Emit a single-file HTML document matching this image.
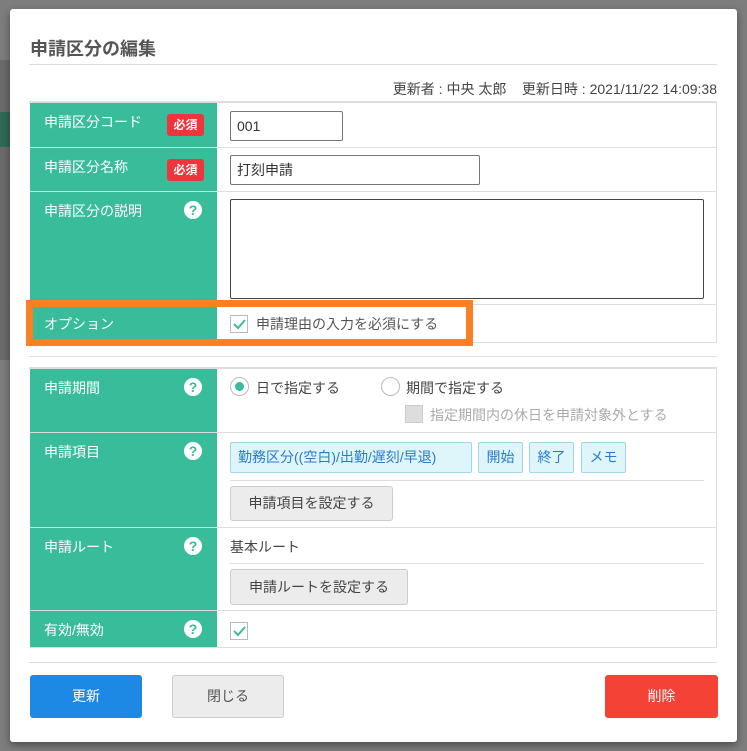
<!DOCTYPE html>
<html><head><meta charset="utf-8"><style>
*{box-sizing:border-box;margin:0;padding:0}
body{width:747px;height:751px;background:#7d7d7d;position:relative;overflow:hidden;font-family:"Liberation Sans","Noto Sans CJK JP",sans-serif;font-size:14px;color:#333}
.a{position:absolute}
.modal{left:10px;top:9px;width:727px;height:733px;background:#fff;border-radius:3px;box-shadow:0 3px 8px rgba(0,0,0,.4)}
.lab{background:#38bc99;color:#fff;left:30px;width:187px;border-bottom:1px solid #dcdcdc}
.lab span{position:absolute;left:14px;top:9px}
.val{left:217px;width:500px;border:1px solid #ddd;border-top:none;border-left:none;background:#fff}
.req{background:#f0343c;color:#fff;font-size:12px;font-weight:bold;border-radius:3px;width:37px;height:22px;text-align:center;line-height:22px;left:167px;top:114px}
.q{width:18px;height:18px;border-radius:50%;background:#fff;color:#38bc99;font-weight:bold;font-size:14px;text-align:center;line-height:18px;left:184px;top:11px}
.inp{border:1px solid #777;border-radius:2px;background:#fff;padding-left:6px;line-height:28px;font-size:14px}
.cb{width:18px;height:18px;border:1px solid #bbb;background:#fff}
.btn{border:1px solid #ccc;border-radius:3px;background:#ececec;text-align:center;color:#444}
.tag{background:#def5fa;border:1px solid #9fd6ea;color:#2a7bd0;border-radius:2px;height:31px;line-height:29px;text-align:center;top:442px;font-size:14px}
.hr{height:1px;background:#ddd}
</style></head><body>
<div class="a" style="left:0;top:60px;width:10px;height:300px;background:#6a6a6a"></div>
<div class="a" style="left:0;top:112px;width:10px;height:35px;background:#2f6a56"></div>
<div class="a modal"></div>
<div class="a" style="left:30px;top:35px;font-size:18px;font-weight:bold;color:#555">申請区分の編集</div>
<div class="a hr" style="left:29px;top:64px;width:688px"></div>
<div class="a" style="right:30px;top:79px;font-size:14px;color:#444;white-space:nowrap">更新者 : 中央 太郎 &nbsp;&nbsp; 更新日時 : 2021/11/22 14:09:38</div>
<div class="a" style="left:29px;top:101px;width:688px;height:2px;background:#ddd"></div>

<div class="a lab" style="top:103px;height:45px"><span>申請区分コード</span></div><div class="a req">必須</div>
<div class="a lab" style="top:148px;height:44px"><span>申請区分名称</span></div><div class="a req" style="top:159px">必須</div>
<div class="a lab" style="top:192px;height:113px"><span>申請区分の説明</span></div><div class="a q" style="top:201px">?</div>
<div class="a lab" style="top:305px;height:38px"><span style="top:9px">オプション</span></div>
<div class="a val" style="top:103px;height:45px"></div>
<div class="a val" style="top:148px;height:44px"></div>
<div class="a val" style="top:192px;height:113px"></div>
<div class="a val" style="top:305px;height:38px"></div>
<div class="a inp" style="left:230px;top:111px;width:113px;height:30px">001</div>
<div class="a inp" style="left:230px;top:155px;width:250px;height:30px">打刻申請</div>
<div class="a inp" style="left:230px;top:199px;width:474px;height:100px;border-color:#444"></div>
<div class="a cb" style="left:230px;top:315px"></div>
<svg class="a" style="left:231px;top:316px" width="16" height="16"><path d="M3 8 L7 12 L14 4" stroke="#38bc99" stroke-width="2" fill="none"/></svg>
<div class="a" style="left:256px;top:314px;color:#555">申請理由の入力を必須にする</div>
<div class="a" style="left:26px;top:300px;width:447px;height:46px;border:7px solid #fd7f23"></div>
<div class="a hr" style="left:29px;top:356px;width:688px"></div>
<div class="a" style="left:29px;top:367px;width:688px;height:2px;background:#ddd"></div>

<div class="a lab" style="top:369px;height:64px"><span>申請期間</span></div><div class="a q" style="top:378px">?</div>
<div class="a lab" style="top:433px;height:95px"><span>申請項目</span></div><div class="a q" style="top:442px">?</div>
<div class="a lab" style="top:528px;height:83px"><span>申請ルート</span></div><div class="a q" style="top:537px">?</div>
<div class="a lab" style="top:611px;height:37px"><span style="top:9px">有効/無効</span></div><div class="a q" style="top:620px">?</div>
<div class="a val" style="top:369px;height:64px"></div>
<div class="a val" style="top:433px;height:95px"></div>
<div class="a val" style="top:528px;height:83px"></div>
<div class="a val" style="top:611px;height:37px"></div>

<div class="a" style="left:230px;top:377px;width:19px;height:19px;border-radius:50%;border:1px solid #bbb"></div>
<div class="a" style="left:235px;top:382px;width:9px;height:9px;border-radius:50%;background:#38bc99"></div>
<div class="a" style="left:256px;top:378px;color:#444">日で指定する</div>
<div class="a" style="left:381px;top:377px;width:19px;height:19px;border-radius:50%;border:1px solid #bbb"></div>
<div class="a" style="left:406px;top:378px;color:#444">期間で指定する</div>
<div class="a" style="left:405px;top:405px;width:18px;height:18px;background:#ddd;border:1px solid #ccc"></div>
<div class="a" style="left:430px;top:405px;color:#aaa">指定期間内の休日を申請対象外とする</div>

<div class="a tag" style="left:230px;width:242px;text-align:left;padding-left:7px">勤務区分((空白)/出勤/遅刻/早退)</div>
<div class="a tag" style="left:478px;width:45px">開始</div>
<div class="a tag" style="left:529px;width:45px">終了</div>
<div class="a tag" style="left:581px;width:45px">メモ</div>
<div class="a hr" style="left:230px;top:480px;width:474px"></div>
<div class="a btn" style="left:230px;top:486px;width:163px;height:35px;line-height:33px">申請項目を設定する</div>
<div class="a" style="left:230px;top:537px;color:#444">基本ルート</div>
<div class="a hr" style="left:230px;top:563px;width:474px"></div>
<div class="a btn" style="left:230px;top:569px;width:178px;height:36px;line-height:34px">申請ルートを設定する</div>
<div class="a cb" style="left:230px;top:622px"></div>
<svg class="a" style="left:231px;top:623px" width="16" height="16"><path d="M3 8 L7 12 L14 4" stroke="#38bc99" stroke-width="2" fill="none"/></svg>

<div class="a hr" style="left:29px;top:662px;width:688px"></div>
<div class="a btn" style="left:30px;top:675px;width:112px;height:43px;line-height:41px;background:#1e88e5;border-color:#1e88e5;color:#fff">更新</div>
<div class="a btn" style="left:172px;top:675px;width:112px;height:43px;line-height:41px;color:#555">閉じる</div>
<div class="a btn" style="left:605px;top:675px;width:113px;height:43px;line-height:41px;background:#f44336;border-color:#f44336;color:#fff">削除</div>
</body></html>
